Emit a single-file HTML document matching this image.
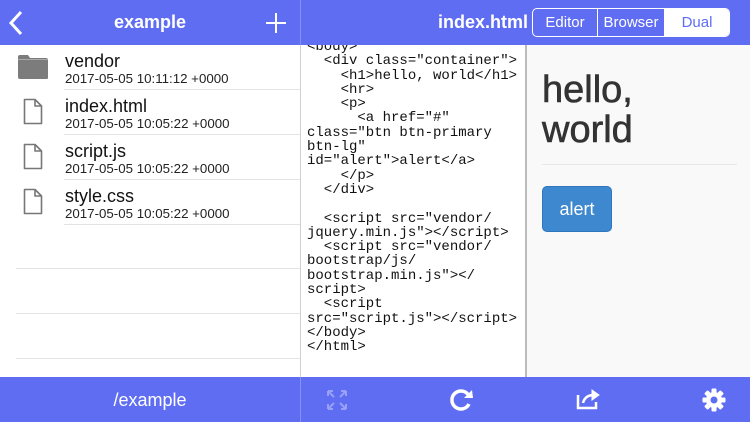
<!DOCTYPE html>
<html><head><style>
*{margin:0;padding:0;box-sizing:border-box}
body{width:750px;height:422px;overflow:hidden;font-family:"Liberation Sans",sans-serif;background:#fff;position:relative}
.bar{position:absolute;left:0;width:750px;height:45px;background:#5f6df3}
.t{position:absolute;color:#fff;font-size:18px}
.row{position:absolute;left:0;width:300px;height:45px}
.row .n{position:absolute;left:65px;top:6px;font-size:18px;color:#111}
.row .d{position:absolute;left:65px;top:26px;font-size:13.3px;color:#222}
.sep{position:absolute;height:1px;background:#e3e3e3;right:0}
pre{position:absolute;left:307px;top:40px;font-family:"Liberation Mono",monospace;font-size:14px;line-height:14.3px;color:#111}
</style></head><body>
<div class="bar" style="top:0"></div>
<div class="bar" style="top:377px"></div>
<div style="position:absolute;left:300px;top:0;width:1px;height:422px;background:#d0d0d0"></div>
<div style="position:absolute;left:300px;top:0;width:1px;height:45px;background:#8590f5"></div>
<div style="position:absolute;left:300px;top:377px;width:1px;height:45px;background:#8590f5"></div>
<svg style="position:absolute;left:8px;top:10px" width="16" height="26"><path d="M13 2 L3 13 L13 24" stroke="#fff" stroke-width="3" fill="none"/></svg>
<div class="t" style="left:0;width:300px;text-align:center;top:12px;font-weight:bold">example</div>
<svg style="position:absolute;left:265px;top:12px" width="22" height="22"><path d="M11 1V21M1 11H21" stroke="#fff" stroke-width="2"/></svg>
<div class="t" style="left:438px;top:12px;font-weight:bold">index.html</div>
<div style="position:absolute;left:532px;top:8px;width:198px;height:29px;border:1px solid #fff;border-radius:5px;overflow:hidden;display:flex;font-size:15px;color:#fff">
<div style="width:65px;text-align:center;line-height:27px;border-right:1px solid #fff">Editor</div>
<div style="width:67px;text-align:center;line-height:27px;border-right:1px solid #fff">Browser</div>
<div style="flex:1;text-align:center;line-height:27px;background:#fff;color:#5f6df3">Dual</div>
</div>
<div class="row" style="top:45px"><svg style="position:absolute;left:17px;top:9px" width="32" height="26"><path d="M1 3Q1 1 3 1H11L13 4H29Q31 4 31 6V24Q31 25 29 25H3Q1 25 1 23Z" fill="#7c7c7c"/><rect x="1" y="5" width="30" height="1" fill="#aaa"/></svg><div class="n">vendor</div><div class="d">2017-05-05 10:11:12 +0000</div></div>
<div class="sep" style="top:89px;left:64px;width:236px"></div>
<div class="row" style="top:90px"><svg style="position:absolute;left:23px;top:8px" width="20" height="27"><path d="M1.5 1.5H12L18.5 8V25.5H1.5Z M12 1.5V8H18.5" stroke="#777" stroke-width="1.6" fill="none" stroke-linejoin="round"/></svg><div class="n">index.html</div><div class="d">2017-05-05 10:05:22 +0000</div></div>
<div class="sep" style="top:134px;left:64px;width:236px"></div>
<div class="row" style="top:135px"><svg style="position:absolute;left:23px;top:8px" width="20" height="27"><path d="M1.5 1.5H12L18.5 8V25.5H1.5Z M12 1.5V8H18.5" stroke="#777" stroke-width="1.6" fill="none" stroke-linejoin="round"/></svg><div class="n">script.js</div><div class="d">2017-05-05 10:05:22 +0000</div></div>
<div class="sep" style="top:179px;left:64px;width:236px"></div>
<div class="row" style="top:180px"><svg style="position:absolute;left:23px;top:8px" width="20" height="27"><path d="M1.5 1.5H12L18.5 8V25.5H1.5Z M12 1.5V8H18.5" stroke="#777" stroke-width="1.6" fill="none" stroke-linejoin="round"/></svg><div class="n">style.css</div><div class="d">2017-05-05 10:05:22 +0000</div></div>
<div class="sep" style="top:224px;left:64px;width:236px"></div>
<div class="sep" style="top:268px;left:16px;width:284px"></div>
<div class="sep" style="top:313px;left:16px;width:284px"></div>
<div class="sep" style="top:358px;left:16px;width:284px"></div>
<pre>&lt;body&gt;
  &lt;div class="container"&gt;
    &lt;h1&gt;hello, world&lt;/h1&gt;
    &lt;hr&gt;
    &lt;p&gt;
      &lt;a href="#"
class="btn btn-primary
btn-lg"
id="alert"&gt;alert&lt;/a&gt;
    &lt;/p&gt;
  &lt;/div&gt;

  &lt;script src="vendor/
jquery.min.js"&gt;&lt;/script&gt;
  &lt;script src="vendor/
bootstrap/js/
bootstrap.min.js"&gt;&lt;/
script&gt;
  &lt;script
src="script.js"&gt;&lt;/script&gt;
&lt;/body&gt;
&lt;/html&gt;</pre>
<div style="position:absolute;left:301px;top:40px;width:225px;height:5px;background:#5f6df3"></div>
<div style="position:absolute;left:525px;top:45px;width:2px;height:332px;background:#bbb"></div>
<div style="position:absolute;left:527px;top:45px;width:223px;height:332px;background:#f9f9f9">
<div style="position:absolute;left:15px;top:25px;font-size:38px;line-height:40px;color:#333;-webkit-text-stroke:0.6px #333">hello,<br>world</div>
<div style="position:absolute;left:15px;top:119px;width:195px;height:1px;background:#e8e8e8"></div>
<div style="position:absolute;left:15px;top:141px;width:70px;height:46px;background:#3d88ce;border:1px solid #2f77bd;border-radius:5px;color:#fff;font-size:18px;text-align:center;line-height:44px">alert</div>
</div>
<div class="t" style="left:0;width:300px;text-align:center;top:390px">/example</div>
<svg style="position:absolute;left:326px;top:389px" width="22" height="22" fill="none" stroke="#98a1f5" stroke-width="2"><path d="M2 2L8 8M2 2H7M2 2V7 M20 2L14 8M20 2H15M20 2V7 M2 20L8 14M2 20H7M2 20V15 M20 20L14 14M20 20H15M20 20V15"/></svg>
<svg style="position:absolute;left:448px;top:387px" width="28" height="26"><path d="M21 9A9 9 0 1 0 21 17" stroke="#fff" stroke-width="3.5" fill="none"/><path d="M16 11L25 11L24 3Z" fill="#fff"/></svg>
<svg style="position:absolute;left:575px;top:387px" width="26" height="24" fill="none" stroke="#fff" stroke-width="2.5"><path d="M3 8V21H21V15"/><path d="M8 16Q10 8 19 8" /><path d="M17 3L24 8L17 13Z" fill="#fff" stroke-width="1"/></svg>
<svg style="position:absolute;left:702px;top:388px" width="24" height="24"><g transform="translate(12 12)" fill="#fff"><circle r="8"/><g id="k"><rect x="-2.5" y="-11.5" width="5" height="5" rx="1"/></g><use href="#k" transform="rotate(45)"/><use href="#k" transform="rotate(90)"/><use href="#k" transform="rotate(135)"/><use href="#k" transform="rotate(180)"/><use href="#k" transform="rotate(225)"/><use href="#k" transform="rotate(270)"/><use href="#k" transform="rotate(315)"/><circle r="3.5" fill="#5f6df3"/></g></svg>
</body></html>
